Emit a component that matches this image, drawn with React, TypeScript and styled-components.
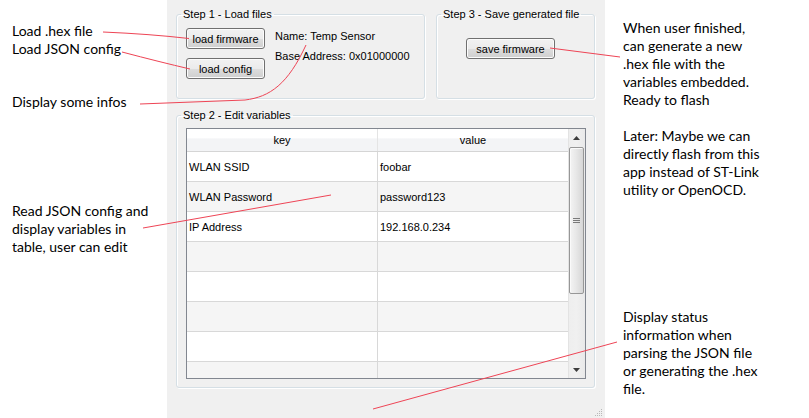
import React from "react";
import styled, { createGlobalStyle } from "styled-components";

const Global = createGlobalStyle`
  html, body { margin: 0; padding: 0; background: #ffffff; }
  body { font-family: "Liberation Sans", Arial, sans-serif; }
`;

const Page = styled.div`
  position: relative;
  width: 809px;
  height: 418px;
  display: flex;
  background: #ffffff;
  overflow: hidden;
`;

const Notes = styled.div<{ $w?: number; $pl: number; $pt: number }>`
  ${(p) => (p.$w ? `width: ${p.$w}px; flex: none;` : "flex: 1;")}
  box-sizing: border-box;
  padding-left: ${(p) => p.$pl}px;
  padding-top: ${(p) => p.$pt}px;
  font-family: Lato, "Open Sans", sans-serif;
  font-size: 14px;
  line-height: 18px;
  color: #000;
  display: flex;
  flex-direction: column;
`;

const Note = styled.div<{ $mt?: number }>`
  margin-top: ${(p) => p.$mt ?? 0}px;
  white-space: pre;
`;

const Window = styled.div`
  position: relative;
  width: 438px;
  flex: none;
  box-sizing: border-box;
  background: #f0f0f0;
  padding: 8px 10px 0 9px;
  display: flex;
  flex-direction: column;
  font-size: 11px;
  color: #000;
`;

const TopRow = styled.div`
  display: flex;
  gap: 11px;
`;

const Group = styled.fieldset<{ $w?: number; $mt?: number }>`
  margin: ${(p) => p.$mt ?? 0}px 0 0 0;
  padding: 0;
  min-width: 0;
  ${(p) => (p.$w ? `width: ${p.$w}px;` : "")}
  box-sizing: border-box;
  border: 1px solid #d5dfe5;
  border-radius: 3px;
  box-shadow: 1px 1px 0 #ffffff, inset 1px 1px 0 #ffffff;
`;

const Legend = styled.legend`
  margin-left: 4px;
  padding: 0 2px;
  font-size: 11px;
  line-height: 13px;
  color: #000;
`;

const Step1Body = styled.div`
  display: flex;
  height: 77px;
`;

const ButtonCol = styled.div`
  display: flex;
  flex-direction: column;
  gap: 9px;
  padding: 7px 0 0 9px;
`;

const InfoCol = styled.div`
  display: flex;
  flex-direction: column;
  gap: 7px;
  padding: 9px 0 0 10px;
  line-height: 13px;
`;

const Button = styled.button<{ $w: number }>`
  width: ${(p) => p.$w}px;
  height: 21px;
  box-sizing: border-box;
  padding: 0;
  font-family: "Liberation Sans", Arial, sans-serif;
  font-size: 11px;
  color: #000;
  border: 1px solid #707070;
  border-radius: 3px;
  background: linear-gradient(#f2f2f2 0%, #ebebeb 50%, #dddddd 51%, #cfcfcf 100%);
  box-shadow: inset 0 0 0 1px #fcfcfc;
`;

const Step3Body = styled.div`
  height: 77px;
  padding: 17px 0 0 29px;
  box-sizing: border-box;
`;

const Step2Body = styled.div`
  padding: 6px 9px 8px 9px;
`;

const Table = styled.div`
  width: 400px;
  height: 251px;
  box-sizing: border-box;
  border: 1px solid #828790;
  background: #ffffff;
  display: flex;
  overflow: hidden;
`;

const Grid = styled.div`
  flex: 1;
  display: flex;
  flex-direction: column;
  overflow: hidden;
`;

const Row = styled.div<{ $alt?: boolean; $head?: boolean }>`
  display: grid;
  grid-template-columns: 191px 190px;
  flex: none;
  height: ${(p) => (p.$head ? 23 : 30)}px;
  box-sizing: border-box;
  border-bottom: 1px solid ${(p) => (p.$head ? "#d5d5d5" : "#d8d8d8")};
  background: ${(p) =>
    p.$head
      ? "linear-gradient(#ffffff 0%, #ffffff 40%, #f3f4f6 45%, #f3f4f6 100%)"
      : p.$alt
      ? "#f5f5f5"
      : "#ffffff"};
`;

const Cell = styled.div<{ $head?: boolean; $first?: boolean }>`
  display: flex;
  align-items: center;
  justify-content: ${(p) => (p.$head ? "center" : "flex-start")};
  padding-left: ${(p) => (p.$head ? 0 : 2)}px;
  border-right: ${(p) => (p.$first ? `1px solid ${p.$head ? "#e4e4e4" : "#d8d8d8"}` : "none")};
  font-size: 11px;
  color: #000;
  white-space: nowrap;
`;

const Scrollbar = styled.div`
  width: 17px;
  flex: none;
  display: flex;
  flex-direction: column;
  background: linear-gradient(to right, #e3e3e3 0, #e3e3e3 1px, #eeeeee 1px, #f0f0f0 50%, #e9e9e9 100%);
`;

const ArrowBtn = styled.div<{ $h: number }>`
  height: ${(p) => p.$h}px;
  flex: none;
  display: flex;
  align-items: center;
  justify-content: center;
`;

const Thumb = styled.div`
  height: 147px;
  margin: 0 1px 0 1px;
  box-sizing: border-box;
  border: 1px solid #979797;
  border-radius: 2px;
  background: linear-gradient(to right, #f4f4f4 0%, #e8e8e8 45%, #d6d6d6 100%);
  box-shadow: inset 1px 1px 0 #fafafa;
  display: flex;
  align-items: center;
  justify-content: center;
`;

const Track = styled.div`
  flex: 1;
`;

const Grip = styled.svg`
  position: absolute;
  right: 2px;
  bottom: 1px;
`;

const Overlay = styled.svg`
  position: absolute;
  left: 0;
  top: 0;
  pointer-events: none;
`;

const rows: [string, string][] = [
  ["WLAN SSID", "foobar"],
  ["WLAN Password", "password123"],
  ["IP Address", "192.168.0.234"],
  ["", ""],
  ["", ""],
  ["", ""],
  ["", ""],
  ["", ""],
];

export default function App() {
  return (
    <>
      <Global />
      <Page>
        <Notes $w={167} $pl={12} $pt={22}>
          <Note>Load .hex file</Note>
          <Note>Load JSON config</Note>
          <Note $mt={35}>Display some infos</Note>
          <Note $mt={91}>Read JSON config and</Note>
          <Note>display variables in</Note>
          <Note>table, user can edit</Note>
        </Notes>

        <Window>
          <TopRow>
            <Group $w={249}>
              <Legend>Step 1 - Load files</Legend>
              <Step1Body>
                <ButtonCol>
                  <Button $w={79}>load firmware</Button>
                  <Button $w={79}>load config</Button>
                </ButtonCol>
                <InfoCol>
                  <div>Name: Temp Sensor</div>
                  <div>Base Address: 0x01000000</div>
                </InfoCol>
              </Step1Body>
            </Group>
            <Group $w={159}>
              <Legend>Step 3 - Save generated file</Legend>
              <Step3Body>
                <Button $w={89}>save firmware</Button>
              </Step3Body>
            </Group>
          </TopRow>

          <Group $mt={10}>
            <Legend>Step 2 - Edit variables</Legend>
            <Step2Body>
              <Table>
                <Grid>
                  <Row $head>
                    <Cell $head $first>key</Cell>
                    <Cell $head>value</Cell>
                  </Row>
                  {rows.map(([k, v], i) => (
                    <Row key={i} $alt={i % 2 === 1}>
                      <Cell $first>{k}</Cell>
                      <Cell>{v}</Cell>
                    </Row>
                  ))}
                </Grid>
                <Scrollbar>
                  <ArrowBtn $h={18}>
                    <svg width="7" height="4" viewBox="0 0 7 4">
                      <path d="M0 4 L3.5 0 L7 4 Z" fill="#3c3c3c" />
                    </svg>
                  </ArrowBtn>
                  <Thumb>
                    <svg width="7" height="7" viewBox="0 0 7 7">
                      <path d="M0 1.5 H7 M0 3.5 H7 M0 5.5 H7" stroke="#7a7a7a" strokeWidth="1" />
                    </svg>
                  </Thumb>
                  <Track />
                  <ArrowBtn $h={17}>
                    <svg width="7" height="4" viewBox="0 0 7 4">
                      <path d="M0 0 L3.5 4 L7 0 Z" fill="#3c3c3c" />
                    </svg>
                  </ArrowBtn>
                </Scrollbar>
              </Table>
            </Step2Body>
          </Group>

          <Grip width="8" height="8" viewBox="0 0 8 8">
            <g fill="#b9b9b9">
              <rect x="6" y="0" width="1" height="1" />
              <rect x="4" y="2" width="1" height="1" />
              <rect x="6" y="2" width="1" height="1" />
              <rect x="2" y="4" width="1" height="1" />
              <rect x="4" y="4" width="1" height="1" />
              <rect x="6" y="4" width="1" height="1" />
              <rect x="0" y="6" width="1" height="1" />
              <rect x="2" y="6" width="1" height="1" />
              <rect x="4" y="6" width="1" height="1" />
              <rect x="6" y="6" width="1" height="1" />
            </g>
          </Grip>
        </Window>

        <Notes $pl={18} $pt={19}>
          <Note>When user finished,</Note>
          <Note>can generate a new</Note>
          <Note>.hex file with the</Note>
          <Note>variables embedded.</Note>
          <Note>Ready to flash</Note>
          <Note $mt={18}>Later: Maybe we can</Note>
          <Note>directly flash from this</Note>
          <Note>app instead of ST-Link</Note>
          <Note>utility or OpenOCD.</Note>
          <Note $mt={109}>Display status</Note>
          <Note>information when</Note>
          <Note>parsing the JSON file</Note>
          <Note>or generating the .hex</Note>
          <Note>file.</Note>
        </Notes>

        <Overlay width="809" height="418" viewBox="0 0 809 418">
          <g stroke="#ee4455" strokeWidth="1" fill="none">
            <path d="M103 32 Q150 34 189 38.5" />
            <path d="M122 52 Q160 62 190 69" />
            <path d="M140 104 L245 100 C270 97 288 84 306 45" />
            <path d="M550 48 L620 57" />
            <path d="M143 228 L331 195" />
            <path d="M617 342 L373 409" />
          </g>
        </Overlay>
      </Page>
    </>
  );
}
